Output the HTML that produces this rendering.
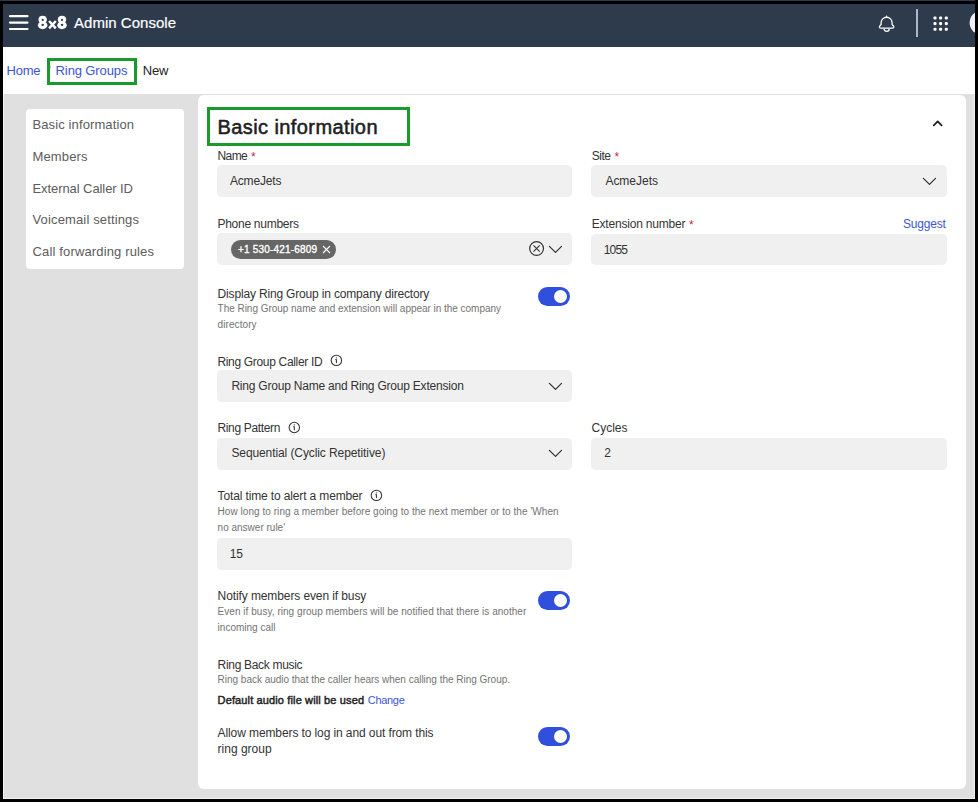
<!DOCTYPE html>
<html><head><meta charset="utf-8">
<style>
html,body{margin:0;padding:0;}
body{width:978px;height:802px;background:#000;position:relative;overflow:hidden;font-family:"Liberation Sans",sans-serif;}
.a{position:absolute;}
.t{position:absolute;white-space:nowrap;font-family:"Liberation Sans",sans-serif;}
.inp{position:absolute;background:#f0f0f0;border-radius:4.5px;}
.tog{position:absolute;width:32px;height:19px;border-radius:10px;background:#3050dc;}
.tog:after{content:"";position:absolute;left:16px;top:3px;width:13px;height:13px;border-radius:50%;background:#fff;}
.gb{position:absolute;border:3px solid #1a9a2a;box-sizing:border-box;}
svg{position:absolute;overflow:visible;}
</style></head><body>
<div class="a" style="left:0;top:0;width:978px;height:1px;background:#2e3b4c"></div>
<div class="a" style="left:3px;top:4px;width:972px;height:795px;background:#f2f2f2"></div>
<div class="a" style="left:3px;top:4px;width:972px;height:43px;background:#2e3b4c"></div>
<div class="a" style="left:3px;top:47px;width:972px;height:47px;background:#fff"></div>
<div class="a" style="left:4px;top:94px;width:970px;height:704px;background:#e0e0e0"></div>
<div class="a" style="left:198px;top:95px;width:768px;height:694px;background:#fff;border-radius:6px"></div>
<div class="a" style="left:26px;top:109px;width:158px;height:160px;background:#fff;border-radius:4px"></div>

<!-- header icons -->
<svg style="left:0;top:0" width="978" height="47">
  <g stroke="#fff" stroke-width="2.2" stroke-linecap="round">
    <line x1="10" y1="16.2" x2="27.5" y2="16.2"/>
    <line x1="10" y1="22.6" x2="27.5" y2="22.6"/>
    <line x1="10" y1="29" x2="27.5" y2="29"/>
  </g>
  <g fill="none" stroke="#fff" stroke-width="1.3">
    <path d="M881.1 22.75 A5.5 5.5 0 0 1 892.1 22.75 L892.1 24.6 L893.6 26.2 Q893.9 27 893.7 27.5 Q893.4 28.1 892.6 28.1 L880.6 28.1 Q879.8 28.1 879.5 27.5 Q879.3 27 879.6 26.2 L881.1 24.6 Z"/>
    <path d="M884 28.7 A2.6 2.6 0 0 0 889.2 28.7"/>
    <circle cx="886.6" cy="16.3" r="0.7" fill="#fff" stroke="none"/>
  </g>
  <rect x="916" y="9" width="2" height="28" fill="#a9b7cf"/>
  <g fill="#fff">
    <rect x="933.45" y="16.45" width="3.1" height="3.1" rx="1.1"/><rect x="939.05" y="16.45" width="3.1" height="3.1" rx="1.1"/><rect x="944.75" y="16.45" width="3.1" height="3.1" rx="1.1"/>
    <rect x="933.45" y="22.05" width="3.1" height="3.1" rx="1.1"/><rect x="939.05" y="22.05" width="3.1" height="3.1" rx="1.1"/><rect x="944.75" y="22.05" width="3.1" height="3.1" rx="1.1"/>
    <rect x="933.45" y="27.65" width="3.1" height="3.1" rx="1.1"/><rect x="939.05" y="27.65" width="3.1" height="3.1" rx="1.1"/><rect x="944.75" y="27.65" width="3.1" height="3.1" rx="1.1"/>
  </g>
  <circle cx="981.6" cy="22.8" r="12" fill="#eef0f5"/>
</svg>
<div class="a" style="left:975px;top:0;width:3px;height:802px;background:#000"></div>
<svg style="left:0;top:0" width="80" height="47">
  <g fill="#fff">
    <ellipse cx="42.65" cy="19.6" rx="4.2" ry="3.8"/><ellipse cx="42.65" cy="25.3" rx="4.75" ry="3.85"/>
    <ellipse cx="62" cy="19.6" rx="4.2" ry="3.8"/><ellipse cx="62" cy="25.3" rx="4.75" ry="3.85"/>
  </g>
  <g fill="#2e3b4c">
    <ellipse cx="42.7" cy="20" rx="1.05" ry="1.15"/><ellipse cx="42.7" cy="24.9" rx="1.25" ry="1.15"/>
    <ellipse cx="62.05" cy="20" rx="1.05" ry="1.15"/><ellipse cx="62.05" cy="24.9" rx="1.25" ry="1.15"/>
  </g>
  <path d="M49.1 21 L55.8 28.4 M55.8 21 L49.1 28.4" stroke="#fff" stroke-width="2.4" stroke-linecap="butt"/>
</svg>

<!-- inputs -->
<div class="inp" style="left:217px;top:165px;width:355px;height:32px"></div>
<div class="inp" style="left:217px;top:233px;width:355px;height:32px"></div>
<div class="inp" style="left:217px;top:370px;width:355px;height:32px"></div>
<div class="inp" style="left:217px;top:438px;width:355px;height:32px"></div>
<div class="inp" style="left:217px;top:538px;width:355px;height:32px"></div>
<div class="inp" style="left:591px;top:165px;width:356px;height:32px"></div>
<div class="inp" style="left:591px;top:234px;width:356px;height:31px"></div>
<div class="inp" style="left:591px;top:438px;width:356px;height:32px"></div>

<!-- chip -->
<div class="a" style="left:231px;top:240px;width:105px;height:19px;border-radius:10px;background:#666"></div>

<!-- toggles -->
<div class="tog" style="left:538px;top:287px"></div>
<div class="tog" style="left:538px;top:591px"></div>
<div class="tog" style="left:538px;top:727px"></div>

<!-- green boxes -->
<div class="t" style="left:47px;top:64px;font-size:13px;line-height:13px;color:#6d86c9">/</div>
<div class="t" style="left:134px;top:64px;font-size:13px;line-height:13px;color:#6d86c9">/</div>
<div class="gb" style="left:47px;top:58px;width:90px;height:27px"></div>
<div class="gb" style="left:207px;top:107px;width:203px;height:39px"></div>

<svg style="left:0;top:0" width="978" height="802">
  <g fill="none" stroke="#333" stroke-width="1.3" stroke-linecap="round" stroke-linejoin="round">
    <!-- chevron up -->
    <path d="M933.8 125.4 L937.7 121.4 L941.6 125.4" stroke="#222" stroke-width="1.8"/>
    <!-- dropdown chevrons -->
    <path d="M549.4 246.4 L555.5 252.4 L561.5 246.4"/>
    <path d="M549.4 383.4 L555.5 389.4 L561.5 383.4"/>
    <path d="M549.4 450.4 L555.5 456.4 L561.5 450.4"/>
    <path d="M923.4 178.4 L929.5 184.4 L935.5 178.4"/>
    <!-- circle x -->
    <circle cx="536.6" cy="248.5" r="6.9" stroke-width="1.2"/>
    <path d="M533.5 245.4 L539.7 251.6 M539.7 245.4 L533.5 251.6" stroke-width="1.1" stroke-linecap="butt"/>
  </g>
  <!-- chip x -->
  <path d="M323 246 L330 253 M330 246 L323 253" stroke="#fff" stroke-width="1.1" fill="none"/>
  <!-- info icons -->
  <g fill="none" stroke="#333" stroke-width="1.05">
    <circle cx="336.4" cy="360.4" r="5.2"/>
    <circle cx="294.3" cy="427.5" r="5.2"/>
    <circle cx="376.4" cy="495.4" r="5.2"/>
  </g>
  <g fill="#333">
    <rect x="335.9" y="359.3" width="1.05" height="3.9"/><rect x="335.2" y="359.3" width="1.2" height="0.8"/><circle cx="336.4" cy="357.8" r="0.65"/>
    <rect x="293.8" y="426.4" width="1.05" height="3.9"/><rect x="293.1" y="426.4" width="1.2" height="0.8"/><circle cx="294.3" cy="424.9" r="0.65"/>
    <rect x="375.9" y="494.3" width="1.05" height="3.9"/><rect x="375.2" y="494.3" width="1.2" height="0.8"/><circle cx="376.4" cy="492.8" r="0.65"/>
  </g>
</svg>

<div class="t" style="left:74.00px;top:15.00px;font-size:15px;line-height:15px;color:#ffffff;letter-spacing:0.023px;-webkit-text-stroke:0.2px #fff;">Admin Console</div>
<div class="t" style="left:6.50px;top:63.50px;font-size:13px;line-height:13px;color:#3d55d6;letter-spacing:-0.226px;">Home</div>
<div class="t" style="left:55.60px;top:63.50px;font-size:13px;line-height:13px;color:#3d55d6;letter-spacing:-0.118px;">Ring Groups</div>
<div class="t" style="left:142.70px;top:63.50px;font-size:13px;line-height:13px;color:#222;letter-spacing:-0.103px;">New</div>
<div class="t" style="left:32.50px;top:117.70px;font-size:13px;line-height:13px;color:#5c5c5c;letter-spacing:0.112px;">Basic information</div>
<div class="t" style="left:32.50px;top:149.60px;font-size:13px;line-height:13px;color:#5c5c5c;letter-spacing:0.137px;">Members</div>
<div class="t" style="left:32.50px;top:181.50px;font-size:13px;line-height:13px;color:#5c5c5c;letter-spacing:-0.080px;">External Caller ID</div>
<div class="t" style="left:32.50px;top:213.40px;font-size:13px;line-height:13px;color:#5c5c5c;letter-spacing:0.144px;">Voicemail settings</div>
<div class="t" style="left:32.50px;top:245.30px;font-size:13px;line-height:13px;color:#5c5c5c;letter-spacing:0.150px;">Call forwarding rules</div>
<div class="t" style="left:217.50px;top:117.17px;font-size:20px;line-height:20px;color:#1e1e1e;letter-spacing:0.413px;-webkit-text-stroke:0.55px #1e1e1e;">Basic information</div>
<div class="t" style="left:217.50px;top:150.34px;font-size:12px;line-height:12px;color:#333333;letter-spacing:-0.603px;">Name</div>
<div class="t" style="left:229.90px;top:175.34px;font-size:12px;line-height:12px;color:#333333;letter-spacing:-0.169px;">AcmeJets</div>
<div class="t" style="left:217.40px;top:218.34px;font-size:12px;line-height:12px;color:#333333;letter-spacing:-0.260px;">Phone numbers</div>
<div class="t" style="left:217.60px;top:287.74px;font-size:12px;line-height:12px;color:#333333;letter-spacing:-0.168px;">Display Ring Group in company directory</div>
<div class="t" style="left:217.60px;top:304.34px;font-size:10px;line-height:10px;color:#737373;letter-spacing:-0.030px;">The Ring Group name and extension will appear in the company</div>
<div class="t" style="left:217.60px;top:319.54px;font-size:10px;line-height:10px;color:#737373;letter-spacing:0.082px;">directory</div>
<div class="t" style="left:217.40px;top:355.54px;font-size:12px;line-height:12px;color:#333333;letter-spacing:-0.320px;">Ring Group Caller ID</div>
<div class="t" style="left:231.40px;top:380.34px;font-size:12px;line-height:12px;color:#333333;letter-spacing:-0.215px;">Ring Group Name and Ring Group Extension</div>
<div class="t" style="left:217.40px;top:422.44px;font-size:12px;line-height:12px;color:#333333;letter-spacing:-0.337px;">Ring Pattern</div>
<div class="t" style="left:231.40px;top:447.14px;font-size:12px;line-height:12px;color:#333333;letter-spacing:-0.094px;">Sequential (Cyclic Repetitive)</div>
<div class="t" style="left:217.60px;top:490.44px;font-size:12px;line-height:12px;color:#333333;letter-spacing:-0.138px;">Total time to alert a member</div>
<div class="t" style="left:217.60px;top:507.33px;font-size:10px;line-height:10px;color:#737373;letter-spacing:0.047px;">How long to ring a member before going to the next member or to the &#x27;When</div>
<div class="t" style="left:217.60px;top:522.83px;font-size:10px;line-height:10px;color:#737373;">no answer rule&#x27;</div>
<div class="t" style="left:229.70px;top:547.84px;font-size:12px;line-height:12px;color:#333333;">15</div>
<div class="t" style="left:217.60px;top:590.44px;font-size:12px;line-height:12px;color:#333333;letter-spacing:-0.103px;">Notify members even if busy</div>
<div class="t" style="left:217.60px;top:607.33px;font-size:10px;line-height:10px;color:#737373;letter-spacing:0.037px;">Even if busy, ring group members will be notified that there is another</div>
<div class="t" style="left:217.60px;top:622.83px;font-size:10px;line-height:10px;color:#737373;">incoming call</div>
<div class="t" style="left:217.60px;top:658.54px;font-size:12px;line-height:12px;color:#333333;letter-spacing:-0.312px;">Ring Back music</div>
<div class="t" style="left:217.60px;top:674.93px;font-size:10px;line-height:10px;color:#737373;letter-spacing:-0.017px;">Ring back audio that the caller hears when calling the Ring Group.</div>
<div class="t" style="left:217.60px;top:694.89px;font-size:11px;line-height:11px;color:#222;letter-spacing:0.131px;-webkit-text-stroke:0.45px #222;">Default audio file will be used</div>
<div class="t" style="left:367.80px;top:694.89px;font-size:11px;line-height:11px;color:#3d55d6;letter-spacing:-0.306px;">Change</div>
<div class="t" style="left:217.60px;top:726.64px;font-size:12px;line-height:12px;color:#333333;letter-spacing:-0.102px;">Allow members to log in and out from this</div>
<div class="t" style="left:217.60px;top:742.84px;font-size:12px;line-height:12px;color:#333333;">ring group</div>
<div class="t" style="left:591.70px;top:150.34px;font-size:12px;line-height:12px;color:#333333;letter-spacing:-0.459px;">Site</div>
<div class="t" style="left:605.40px;top:175.24px;font-size:12px;line-height:12px;color:#333333;letter-spacing:-0.012px;">AcmeJets</div>
<div class="t" style="left:591.70px;top:218.14px;font-size:12px;line-height:12px;color:#333333;letter-spacing:-0.188px;">Extension number</div>
<div class="t" style="left:603.80px;top:243.74px;font-size:12px;line-height:12px;color:#333333;letter-spacing:-0.865px;">1055</div>
<div class="t" style="left:591.50px;top:422.44px;font-size:12px;line-height:12px;color:#333333;">Cycles</div>
<div class="t" style="left:604.20px;top:447.34px;font-size:12px;line-height:12px;color:#333333;">2</div>
<div class="t" style="left:238.00px;top:244.53px;font-size:10px;line-height:10px;color:#ffffff;letter-spacing:0.182px;-webkit-text-stroke:0.35px #fff;">+1 530-421-6809</div>
<div class="t" style="left:251px;top:151px;font-size:12px;line-height:12px;color:#c8283c">*</div>
<div class="t" style="left:614.6px;top:151px;font-size:12px;line-height:12px;color:#c8283c">*</div>
<div class="t" style="left:689px;top:219px;font-size:12px;line-height:12px;color:#c8283c">*</div>
<div class="t" style="left:903px;top:217.8px;font-size:12px;line-height:12px;color:#3d55d6;letter-spacing:-0.2px">Suggest</div>
</body></html>
